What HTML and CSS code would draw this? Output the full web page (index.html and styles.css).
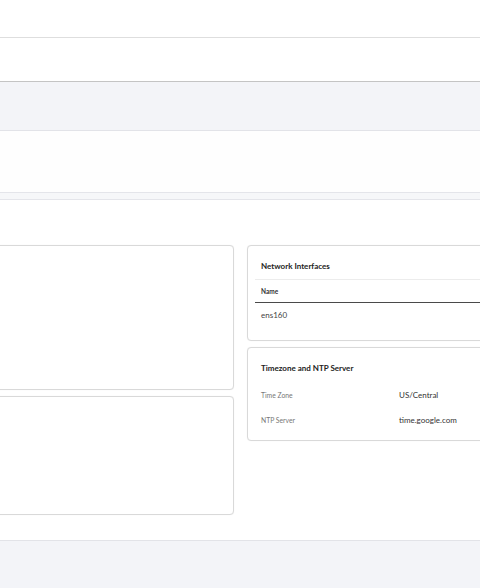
FILE: index.html
```html
<!DOCTYPE html>
<html>
<head>
<meta charset="utf-8">
<link rel="stylesheet" href="styles.css">
</head>
<body>
<div class="page">
  <div class="topgap"></div>
  <div class="toolbar"></div>
  <div class="subbar"></div>
  <div class="panel"></div>
  <div class="sep"></div>
  <div class="content">
    <div class="grid">
      <div class="col">
        <div class="card card-a"></div>
        <div class="card card-b"></div>
      </div>
      <div class="col">
        <div class="card card-net">
          <div class="card-title">Network Interfaces</div>
          <div class="divider"></div>
          <div class="th">Name</div>
          <div class="td">ens160</div>
        </div>
        <div class="card card-tz">
          <div class="card-title">Timezone and NTP Server</div>
          <div class="kv">
            <span class="k">Time Zone</span><span class="v">US/Central</span>
          </div>
          <div class="kv">
            <span class="k">NTP Server</span><span class="v">time.google.com</span>
          </div>
        </div>
      </div>
    </div>
  </div>
  <div class="footer"></div>
</div>
</body>
</html>
```
FILE: styles.css
```css
html, body {
  margin: 0;
  padding: 0;
  background: #ffffff;
  font-family: Lato, "Open Sans", "Liberation Sans", sans-serif;
  overflow: hidden;
}
.page {
  width: 480px;
  height: 588px;
  display: flex;
  flex-direction: column;
  overflow: hidden;
}
.topgap {
  height: 37px;
  background: #ffffff;
}
.toolbar {
  height: 43px;
  border-top: 1px solid #dedede;
  border-bottom: 1px solid #c4c4c4;
  background: #ffffff;
}
.subbar {
  height: 48px;
  background: #f3f4f8;
  border-bottom: 1px solid #e2e3e8;
}
.panel {
  height: 61px;
  background: #fefefe;
  border-bottom: 1px solid #e4e5ea;
}
.sep {
  height: 6px;
  background: #f6f7f9;
  border-bottom: 1px solid #e4e5ea;
}
.content {
  height: 341px;
  padding-top: 45px;
  box-sizing: border-box;
  background: #ffffff;
  border-bottom: 1px solid #e2e3e8;
  overflow: hidden;
}
.grid {
  display: grid;
  grid-template-columns: 250px 260px;
  column-gap: 13px;
  margin-left: -16px;
}
.col {
  display: flex;
  flex-direction: column;
  gap: 6px;
}
.card {
  border: 1px solid #d9d9d9;
  border-radius: 4px;
  background: #ffffff;
  box-sizing: border-box;
  box-shadow: 0 0 1px rgba(0, 0, 0, 0.08);
}
.card-a { height: 145px; }
.card-b { height: 119px; }
.card-net {
  height: 96px;
  padding: 0 0 0 7px;
}
.card-tz {
  height: 94px;
  padding: 0 0 0 7px;
}
.card-title {
  font-size: 8px;
  font-weight: 700;
  color: #222;
  padding: 15px 6px 0;
  height: 33px;
  box-sizing: border-box;
}
.divider {
  height: 1px;
  background: #ececec;
}
.th {
  font-size: 6.5px;
  font-weight: 700;
  color: #333;
  padding: 0 6px;
  height: 22px;
  line-height: 23px;
  border-bottom: 1px solid #4a4a4a;
}
.td {
  font-size: 8px;
  color: #444;
  padding: 0 6px;
  line-height: 24px;
}
.card-tz .card-title {
  height: 35px;
}
.kv {
  display: grid;
  grid-template-columns: 138px 1fr;
  padding: 0 6px;
  height: 25px;
  line-height: 25px;
  align-items: center;
}
.k {
  font-size: 6.8px;
  color: #777;
}
.v {
  font-size: 8px;
  color: #333;
}
.footer {
  flex: 1;
  background: #f3f4f8;
}
```
